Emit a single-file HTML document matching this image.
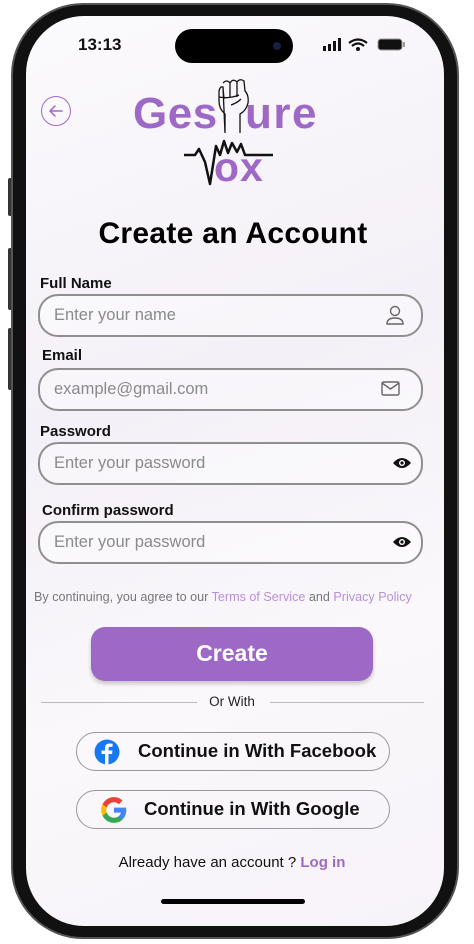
<!DOCTYPE html>
<html><head><meta charset="utf-8">
<style>
*{margin:0;padding:0;box-sizing:border-box}
body{width:474px;height:944px;background:#fff;position:relative;overflow:hidden;font-family:"Liberation Sans",sans-serif}
.frame{position:absolute;left:11px;top:3px;width:448px;height:936px;border-radius:72px;background:#111;border:2px solid #555}
.screen{position:absolute;left:26px;top:16px;width:418px;height:910px;border-radius:58px;background:linear-gradient(160deg,#fbfafc 0%,#f4f0f7 40%,#faf8fb 70%,#f7f3f9 100%);overflow:hidden}
.btn{position:absolute;left:8px;width:4px;background:#333;border-radius:2px}
.island{position:absolute;left:175px;top:29px;width:118px;height:34px;border-radius:17px;background:#000}
.abs{position:absolute}
.lbl{position:absolute;font-weight:bold;font-size:15px;color:#111}
.inp{position:absolute;left:38px;width:385px;height:43px;border:2px solid #8f8f8f;border-radius:20px;font-size:16.5px;color:#8a8a8a;padding-left:14px;line-height:39px;background:rgba(255,255,255,.4)}
.soc{position:absolute;left:76px;width:314px;height:39px;border:1.5px solid #999;border-radius:20px;font-weight:bold;font-size:18.5px;color:#111;line-height:36px;white-space:nowrap}
</style></head><body>
<div class="btn" style="top:178px;height:38px"></div>
<div class="btn" style="top:248px;height:62px"></div>
<div class="btn" style="top:328px;height:62px"></div>
<div class="frame"></div>
<div class="screen"></div>
<div class="island"></div>
<div class="abs" style="left:273px;top:42px;width:8px;height:8px;border-radius:4px;background:#1a2040"></div>
<div class="abs" style="left:78px;top:35px;font-size:17px;font-weight:bold;color:#111">13:13</div>
<svg class="abs" style="left:322px;top:38px" width="84" height="14">
<rect x="1" y="8" width="3" height="5" fill="#111"/><rect x="6" y="6" width="3" height="7" fill="#111"/><rect x="11" y="3" width="3" height="10" fill="#111"/><rect x="16" y="0" width="3" height="13" fill="#111"/>
<path d="M27 5 Q36 -2 45 5 M30 8 Q36 3 42 8" stroke="#111" stroke-width="2.2" fill="none"/><circle cx="36" cy="11" r="2" fill="#111"/>
<rect x="56" y="1" width="24" height="11" rx="3" fill="#111" stroke="#999" stroke-width="1"/><rect x="81" y="4" width="2" height="5" fill="#999"/>
</svg>
<svg class="abs" style="left:40px;top:95px" width="32" height="32"><circle cx="16" cy="16" r="14.5" fill="none" stroke="#a06ac8" stroke-width="1"/><path d="M22 16 H10 M15 11 L10 16 L15 21" stroke="#a06ac8" stroke-width="1.5" fill="none" stroke-linecap="round"/></svg>
<div class="abs" style="left:133px;top:89px;font-size:44px;font-weight:bold;color:#9e69c6;letter-spacing:0.5px">Ges</div>
<div class="abs" style="left:245px;top:89px;font-size:44px;font-weight:bold;color:#9e69c6;letter-spacing:1.5px">ure</div>
<svg class="abs" style="left:213px;top:77px" width="40" height="58" fill="none" stroke="#111" stroke-width="1.3">
<path d="M10 6 Q14 2 17 6 Q20 1 24 5 Q27 1 31 4 L32 14 Q36 18 35 26 Q33 34 27 37 L27 56 M12 56 L12 37 Q6 32 6 24 L6 14 Q7 9 10 10 Z M10 10 L11 22 M17 6 L17 20 M24 5 L24 20 M6 20 Q16 22 26 18 M18 28 Q24 26 28 22"/></svg>
<svg class="abs" style="left:183px;top:138px" width="95" height="50"><path d="M1 17 H12 L16 11 L22 24 L27 46 L33 8 L37 17 L41 3 L45 15 L49 5 L54 14 L58 6 L62 17 H90" stroke="#111" stroke-width="2.5" fill="none" stroke-linejoin="round"/></svg>
<div class="abs" style="left:214px;top:144px;font-size:41px;font-weight:bold;color:#9e69c6;letter-spacing:1px">ox</div>
<div class="abs" style="left:0;width:466px;top:217px;text-align:center;font-size:30px;font-weight:bold;color:#000;letter-spacing:0.3px">Create an Account</div>
<div class="lbl" style="left:40px;top:275px">Full Name</div>
<div class="inp" style="top:294px">Enter your name</div>
<svg class="abs" style="left:384px;top:304px" width="22" height="22" fill="none" stroke="#666" stroke-width="1.4"><circle cx="11" cy="7" r="4.5"/><path d="M3 20 Q3 14 11 14 Q19 14 19 20 Z"/></svg>
<div class="lbl" style="left:42px;top:347px">Email</div>
<div class="inp" style="top:368px">example@gmail.com</div>
<svg class="abs" style="left:381px;top:381px" width="20" height="16" fill="none" stroke="#666" stroke-width="1.4"><rect x="1" y="1" width="17" height="13" rx="1.5"/><path d="M1 2 L9.5 8 L18 2"/></svg>
<div class="lbl" style="left:40px;top:423px">Password</div>
<div class="inp" style="top:442px">Enter your password</div>
<svg class="abs" style="left:392px;top:456px" width="20" height="14"><path d="M1 7 Q10 -3 19 7 Q10 17 1 7Z" fill="#111"/><circle cx="10" cy="7" r="3" fill="#fff"/><circle cx="10" cy="7" r="1.6" fill="#111"/></svg>
<div class="lbl" style="left:42px;top:502px">Confirm password</div>
<div class="inp" style="top:521px">Enter your password</div>
<svg class="abs" style="left:392px;top:535px" width="20" height="14"><path d="M1 7 Q10 -3 19 7 Q10 17 1 7Z" fill="#111"/><circle cx="10" cy="7" r="3" fill="#fff"/><circle cx="10" cy="7" r="1.6" fill="#111"/></svg>
<div class="abs" style="left:34px;width:400px;top:590px;font-size:12.6px;color:#777;white-space:nowrap">By continuing, you agree to our <span style="color:#b88fd8">Terms of Service</span> and <span style="color:#b88fd8">Privacy Policy</span></div>
<div class="abs" style="left:91px;top:627px;width:282px;height:54px;border-radius:14px;background:#9e69c6;box-shadow:0 3px 4px rgba(0,0,0,.2);color:#fff;font-size:23px;font-weight:bold;text-align:center;line-height:52px">Create</div>
<div class="abs" style="left:41px;top:702px;width:156px;height:1px;background:#bbb"></div>
<div class="abs" style="left:270px;top:702px;width:154px;height:1px;background:#bbb"></div>
<div class="abs" style="left:0;width:464px;top:694px;text-align:center;font-size:13.5px;color:#222">Or With</div>
<div class="soc" style="top:732px"><span style="position:absolute;left:61px">Continue in With Facebook</span></div>
<svg class="abs" style="left:94px;top:739px" width="28" height="28"><circle cx="13" cy="13" r="12.5" fill="#1877f2"/><path d="M14.5 25.5 V15 H18 L18.5 11.5 H14.5 V9.5 Q14.5 7.8 16.3 7.8 H18.6 V4.8 Q17 4.5 15.6 4.5 Q11 4.5 11 9 V11.5 H7.5 V15 H11 V25.5Z" fill="#fff"/></svg>
<div class="soc" style="top:790px"><span style="position:absolute;left:67px">Continue in With Google</span></div>
<svg class="abs" style="left:100px;top:796px" width="28" height="28" viewBox="0 0 24 24"><path d="M22.5 12.2c0-.8-.1-1.5-.2-2.2H12v4.2h5.9c-.3 1.4-1 2.5-2.2 3.3v2.7h3.5c2.1-1.9 3.3-4.7 3.300-8z" fill="#4285f4"/><path d="M12 23c3 0 5.5-1 7.2-2.7l-3.5-2.7c-1 .7-2.2 1-3.7 1-2.9 0-5.3-1.9-6.2-4.5H2.2v2.8C4 20.5 7.7 23 12 23z" fill="#34a853"/><path d="M5.8 14.1c-.2-.7-.4-1.4-.4-2.1s.1-1.4.4-2.1V7.1H2.2C1.4 8.6 1 10.2 1 12s.4 3.4 1.2 4.9z" fill="#fbbc05"/><path d="M12 5.4c1.6 0 3.1.6 4.2 1.7l3.1-3.1C17.5 2.1 15 1 12 1 7.7 1 4 3.5 2.2 7.1l3.6 2.8C6.7 7.3 9.1 5.4 12 5.4z" fill="#ea4335"/></svg>
<div class="abs" style="left:0;width:464px;top:854px;text-align:center;font-size:15px;color:#111">Already have an account ? <span style="color:#9e69c6;font-weight:bold">Log in</span></div>
<div class="abs" style="left:161px;top:899px;width:144px;height:5px;border-radius:3px;background:#000"></div>
</body></html>
